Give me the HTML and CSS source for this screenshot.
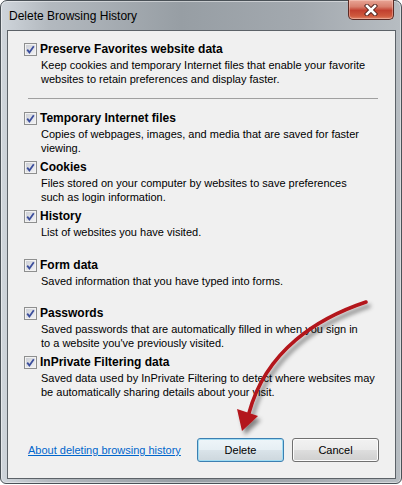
FILE: index.html
```html
<!DOCTYPE html>
<html lang="en">
<head>
    <meta charset="UTF-8">
    <title>Delete Browsing History</title>
    <link rel="stylesheet" href="styles.css">
</head>
<body>
    <div class="window">
        <div class="titlebar">
            <span class="title">Delete Browsing History</span>
            <button class="close" type="button" aria-label="Close">
                <svg width="14" height="12" viewBox="0 0 14 12">
                    <path d="M3 2 L11 10 M11 2 L3 10" stroke="#4a1d18" stroke-width="4.4" stroke-linecap="square"/>
                    <path d="M3 2 L11 10 M11 2 L3 10" stroke="#fff" stroke-width="2.6" stroke-linecap="square"/>
                </svg>
            </button>
        </div>

        <div class="client">
            <div class="option">
                <span class="cb"><svg viewBox="0 0 11 11"><path d="M2.2 5.6 L4.4 8.4 L8.8 2.2" /></svg></span>
                <div class="opt-head">Preserve Favorites website data</div>
                <div class="opt-desc">Keep cookies and temporary Internet files that enable your favorite<br>websites to retain preferences and display faster.</div>
            </div>

            <div class="sep"></div>

            <div class="option">
                <span class="cb"><svg viewBox="0 0 11 11"><path d="M2.2 5.6 L4.4 8.4 L8.8 2.2" /></svg></span>
                <div class="opt-head">Temporary Internet files</div>
                <div class="opt-desc">Copies of webpages, images, and media that are saved for faster<br>viewing.</div>
            </div>
            <div class="option">
                <span class="cb"><svg viewBox="0 0 11 11"><path d="M2.2 5.6 L4.4 8.4 L8.8 2.2" /></svg></span>
                <div class="opt-head">Cookies</div>
                <div class="opt-desc">Files stored on your computer by websites to save preferences<br>such as login information.</div>
            </div>
            <div class="option">
                <span class="cb"><svg viewBox="0 0 11 11"><path d="M2.2 5.6 L4.4 8.4 L8.8 2.2" /></svg></span>
                <div class="opt-head">History</div>
                <div class="opt-desc">List of websites you have visited.</div>
            </div>
            <div class="option short">
                <span class="cb"><svg viewBox="0 0 11 11"><path d="M2.2 5.6 L4.4 8.4 L8.8 2.2" /></svg></span>
                <div class="opt-head">Form data</div>
                <div class="opt-desc">Saved information that you have typed into forms.</div>
            </div>
            <div class="option">
                <span class="cb"><svg viewBox="0 0 11 11"><path d="M2.2 5.6 L4.4 8.4 L8.8 2.2" /></svg></span>
                <div class="opt-head">Passwords</div>
                <div class="opt-desc">Saved passwords that are automatically filled in when you sign in<br>to a website you've previously visited.</div>
            </div>
            <div class="option">
                <span class="cb"><svg viewBox="0 0 11 11"><path d="M2.2 5.6 L4.4 8.4 L8.8 2.2" /></svg></span>
                <div class="opt-head">InPrivate Filtering data</div>
                <div class="opt-desc">Saved data used by InPrivate Filtering to detect where websites may<br>be automatically sharing details about your visit.</div>
            </div>

            <div class="footer">
                <a class="help-link" href="#">About deleting browsing history</a>
                <div class="buttons">
                    <button class="btn btn-default" type="button">Delete</button>
                    <button class="btn" type="button">Cancel</button>
                </div>
            </div>
        </div>

        <!-- red annotation arrow drawn over the dialog -->
        <svg class="arrow" width="402" height="485" viewBox="0 0 402 485">
            <defs>
                <filter id="shadow" x="-20%" y="-20%" width="140%" height="140%">
                    <feDropShadow dx="3" dy="4" stdDeviation="2" flood-color="#000" flood-opacity="0.45"/>
                </filter>
            </defs>
            <g filter="url(#shadow)">
                <path d="M366 302 C318 318 266 350 249 413" fill="none" stroke="#b3141a" stroke-width="3.6" stroke-linecap="round"/>
                <polygon points="237,409 258,416 242,431" fill="#b3141a"/>
            </g>
        </svg>
    </div>
</body>
</html>
```

FILE: styles.css
```css
body {
    margin: 0;
    background: #fff;
    font-family: "Liberation Sans", Arial, sans-serif;
    font-size: 11px;
    color: #000;
}

.window {
    position: relative;
    width: 402px;
    height: 484px;
    box-sizing: border-box;
    display: flex;
    flex-direction: column;
    padding: 0 5px 4px 6px;
    border: 1px solid #4a5157;
    border-radius: 7px 7px 6px 6px;
    background: linear-gradient(to right, #cfd5db 0%, #b3b9bf 12%, #979ea4 45%, #a3a9af 75%, #b7bdc2 100%);
    box-shadow: inset 0 0 0 1px rgba(255,255,255,.45);
}

.titlebar {
    height: 29px;
    display: flex;
    align-items: center;
    padding-left: 2px;
}
.title {
    font-size: 12px;
    color: #000;
}

.close {
    position: absolute;
    top: -1px;
    right: 7px;
    width: 46px;
    height: 20px;
    padding: 0;
    display: flex;
    align-items: center;
    justify-content: center;
    border: 1px solid #5b2a24;
    border-top: none;
    border-radius: 0 0 5px 5px;
    background: linear-gradient(to bottom, #e9a596 0%, #d8806e 35%, #c2402f 55%, #cf5a3e 85%, #e0866a 100%);
    box-shadow: inset 0 0 0 1px rgba(255,220,210,.4);
}

.client {
    flex: 1;
    display: flex;
    flex-direction: column;
    padding: 11px 16px 16px 16px;
    border: 1px solid #5c6268;
    background: #f0f0f0;
}

.option {
    display: grid;
    grid-template-columns: 13px 1fr;
    align-content: start;
    column-gap: 3px;
    min-height: 49px;
}
.option.short {
    min-height: 48px;
}
.opt-head {
    font-weight: bold;
    font-size: 12px;
    line-height: 15px;
}
.opt-desc {
    grid-column: 2;
    margin-top: 1px;
    padding-left: 1px;
    line-height: 14px;
    white-space: nowrap;
}

.cb {
    width: 13px;
    height: 13px;
    box-sizing: border-box;
    margin-top: 1px;
    border: 1px solid #8e8f8f;
    background: linear-gradient(135deg, #c9ccd3, #f5f5f7);
    box-shadow: inset 0 0 0 1px #f2f2f2;
}
.cb svg {
    display: block;
    width: 11px;
    height: 11px;
}
.cb path {
    fill: none;
    stroke: #3b4e9c;
    stroke-width: 1.8;
}

.sep {
    margin: 7px 1px 12px 4px;
    border-top: 1px solid #a0a0a0;
}

.footer {
    margin-top: auto;
    display: flex;
    align-items: center;
}
.help-link {
    padding-left: 4px;
    color: #0066cc;
    text-decoration: underline;
}
.buttons {
    margin-left: auto;
    display: flex;
    gap: 8px;
}
.btn {
    width: 87px;
    height: 24px;
    padding: 0;
    font-family: inherit;
    font-size: 11px;
    color: #000;
    border: 1px solid #707070;
    border-radius: 3px;
    background: linear-gradient(to bottom, #f2f2f2 0%, #ebebeb 48%, #dddddd 52%, #cfcfcf 100%);
    box-shadow: inset 0 0 0 1px #fcfcfc;
}
.btn-default {
    border-color: #3c7fb1;
    background: linear-gradient(to bottom, #eef5f9 0%, #e6eff4 48%, #d9e3e9 52%, #cdd7dd 100%);
    box-shadow: inset 0 0 0 1px #9fdcf3;
}

.arrow {
    position: absolute;
    top: -1px;
    left: -1px;
    pointer-events: none;
}
```
